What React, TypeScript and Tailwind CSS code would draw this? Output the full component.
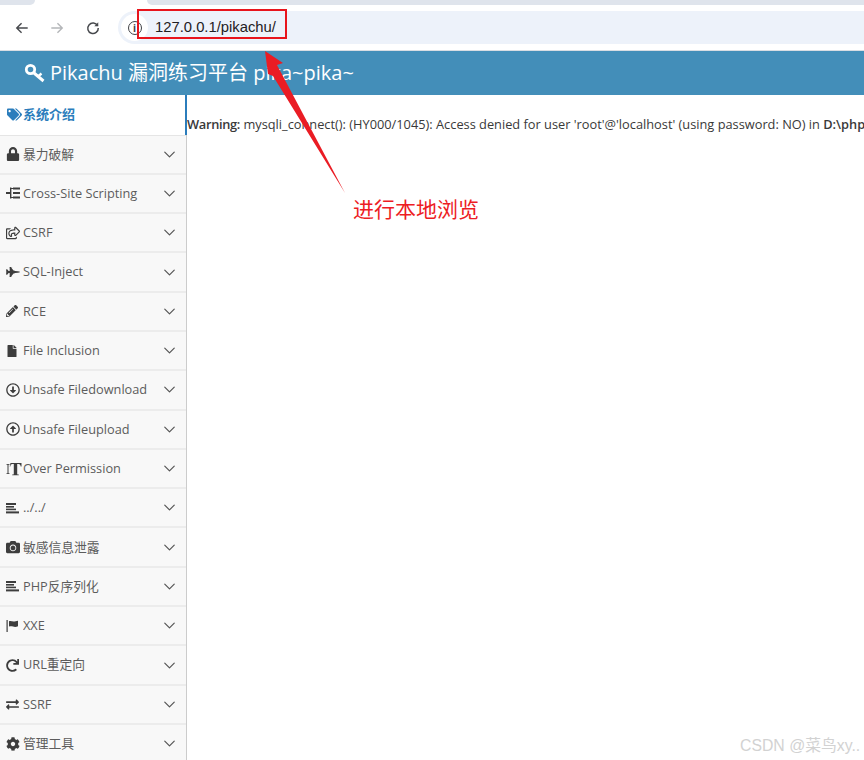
import { ChevronDown } from "lucide-react";
import {
  FaCamera,
  FaCog,
  FaExchangeAlt,
  FaFighterJet,
  FaFile,
  FaLock,
  FaPencilAlt,
  FaRedo,
  FaRegArrowAltCircleDown,
  FaRegArrowAltCircleUp,
  FaRegShareSquare,
  FaTags,
} from "react-icons/fa";
import type { ReactNode } from "react";

const fontStack = "font-['Open_Sans','Noto_Sans_CJK_SC',sans-serif]";

function AlignIcon() {
  return (
    <svg viewBox="0 0 13 12" className="h-3 w-[13px]" fill="currentColor">
      <rect x="0" y="1" width="10" height="2" />
      <rect x="0" y="4" width="8" height="1.6" />
      <rect x="0" y="6.600" width="10" height="1.6" />
      <rect x="0" y="9.400" width="13" height="2" />
    </svg>
  );
}

function TreeIcon() {
  return (
    <svg viewBox="0 0 14 12" className="h-3 w-3.5" fill="currentColor">
      <rect x="0" y="5" width="5" height="2" />
      <rect x="4" y="0.500" width="1.4" height="11" />
      <rect x="7" y="0.500" width="7" height="2" />
      <rect x="7" y="5" width="7" height="2" />
      <rect x="7" y="9.500" width="7" height="2" />
      <rect x="5" y="1" width="2" height="1" />
      <rect x="5" y="10" width="2" height="1" />
    </svg>
  );
}

function FlagIcon() {
  return (
    <svg viewBox="0 0 13 12" className="h-3 w-[13px]" fill="currentColor">
      <rect x="0.500" y="0" width="1.2" height="12" />
      <path d="M3 1.200c2-.9 3.500.7 5.500.2L12 .7v5.600c-2 .9-3.600.8-5 .2-1.400-.5-2.800-.5-4 .1z" />
    </svg>
  );
}

// the "I T" glyph, thin small stem next to a big serif T
function TextHeightIcon() {
  return (
    <svg viewBox="0 0 16 14" className="h-3.5 w-4" fill="currentColor">
      <path d="M.5 2h3v.8h-1v8.400h1v.8h-3v-.8h1V2.800h-1z" />
      <path d="M4.500 1h11v3.500h-.8c-.2-1.500-.6-2.500-2.200-2.500h-1.300v9.800c0 .6.400.8 1.600.8v.6H6.200v-.6c1.200 0 1.600-.2 1.600-.8V2H6.500C4.900 2 4.500 3 4.300 4.500h-.6z" />
    </svg>
  );
}

function KeyIcon() {
  return (
    <svg viewBox="0 0 21 20" className="h-5 w-[21px]" fill="none" stroke="currentColor">
      <circle cx="6.500" cy="6.500" r="4.200" strokeWidth="2.800" />
      <path d="M10 10l9.500 8" strokeWidth="3" />
      <path d="M14 13.500l3.500-3" strokeWidth="2.400" />
    </svg>
  );
}

const menu: { label: string; icon: ReactNode }[] = [
  { label: "暴力破解", icon: <FaLock size={14} /> },
  { label: "Cross-Site Scripting", icon: <TreeIcon /> },
  { label: "CSRF", icon: <FaRegShareSquare size={14} /> },
  { label: "SQL-Inject", icon: <FaFighterJet size={14} /> },
  { label: "RCE", icon: <FaPencilAlt size={12} /> },
  { label: "File Inclusion", icon: <FaFile size={12} /> },
  { label: "Unsafe Filedownload", icon: <FaRegArrowAltCircleDown size={14} /> },
  { label: "Unsafe Fileupload", icon: <FaRegArrowAltCircleUp size={14} /> },
  { label: "Over Permission", icon: <TextHeightIcon /> },
  { label: "../../", icon: <AlignIcon /> },
  { label: "敏感信息泄露", icon: <FaCamera size={14} /> },
  { label: "PHP反序列化", icon: <AlignIcon /> },
  { label: "XXE", icon: <FlagIcon /> },
  { label: "URL重定向", icon: <FaRedo size={13} /> },
  { label: "SSRF", icon: <FaExchangeAlt size={13} /> },
  { label: "管理工具", icon: <FaCog size={14} /> },
];

function ReloadIcon() {
  return (
    <svg viewBox="0 0 16 16" className="ml-[22px] size-[14px]" fill="none" stroke="currentColor" strokeWidth="1.7">
      <path d="M13.300 5.500A6 6 0 1 0 14 8" />
      <path d="M14 1.500v4.500H9.500" fill="currentColor" stroke="none" />
    </svg>
  );
}

function BrowserBar() {
  return (
    <div className="h-[51px] shrink-0 border-b border-[#d9dde3] bg-white">
      <div className="flex h-[5px] bg-white">
        <div className="h-full w-[35px] rounded-br-md bg-[#dfe4ec]" />
        <div className="h-full w-[112px]" />
        <div className="h-full flex-1 rounded-bl-md bg-[#dfe4ec]" />
      </div>
      <div className="flex h-[45px] items-center">
        <div className="flex w-[118px] items-center text-[#47494d]">
          <svg viewBox="0 0 16 16" className="ml-[15px] size-[14px]" fill="none" stroke="currentColor" strokeWidth="1.6">
            <path d="M14.500 8H2M7.500 2.500 2 8l5.500 5.500" />
          </svg>
          <svg viewBox="0 0 16 16" className="ml-[21px] size-[14px] text-[#b4b6b9]" fill="none" stroke="currentColor" strokeWidth="1.6">
            <path d="M1.500 8H14M8.500 2.500 14 8l-5.500 5.500" />
          </svg>
          <ReloadIcon />
        </div>
        <div className="flex h-[33px] flex-1 items-center rounded-l-full bg-[#edf2fa]">
          <div className="ml-[3px] flex size-[27px] items-center justify-center rounded-full bg-white">
            <div className="flex size-[14px] items-center justify-center rounded-full border-[1.5px] border-[#3f4145] text-[10px] leading-none font-bold text-[#3f4145]">
              i
            </div>
          </div>
          <span className="ml-[7px] font-['Liberation_Sans',sans-serif] text-[14.800px] text-[#1f2023]">127.0.0.1/pikachu/</span>
        </div>
      </div>
    </div>
  );
}

function Sidebar() {
  return (
    <aside className="w-[187px] shrink-0 border-r border-[#cccccc] bg-[#f8f8f8]">
      <div className="relative flex h-[40.500px] items-center gap-px border-b border-[#e5e5e5] bg-white pb-px pl-[7px] text-[13px] font-semibold text-[#2b7dbc]">
        <FaTags size={15} />
        <span>系统介绍</span>
        <div className="absolute top-0 right-[-1px] h-full w-0.5 bg-[#2b7dbc]" />
      </div>
      {menu.map((item) => (
        <div
          key={item.label}
          className="flex h-[39.300px] items-center border-b-2 border-[#ececec] pr-[7px] pl-[6px] text-[12.750px] text-[#5c5c5c]"
        >
          <span className="flex w-[17px] shrink-0 items-center justify-start text-[#3d3d3d]">{item.icon}</span>
          <span className="flex-1 truncate">{item.label}</span>
          <ChevronDown size={19} strokeWidth={1.5} className="text-[#555]" />
        </div>
      ))}
    </aside>
  );
}

export default function App() {
  return (
    <div className={`relative flex h-[760px] w-[864px] flex-col overflow-hidden bg-white ${fontStack}`}>
      <BrowserBar />
      <header className="flex h-11 shrink-0 items-center gap-[5px] bg-[#438eb9] pl-6 text-[20px] text-white">
        <KeyIcon />
        <span>Pikachu 漏洞练习平台 pika~pika~</span>
      </header>
      <div className="flex min-h-0 flex-1">
        <Sidebar />
        <main className="min-w-0 flex-1 overflow-hidden pt-5 text-[12.800px] whitespace-nowrap text-[#393939]">
          <b className="font-semibold tracking-[-0.3px]">Warning:</b> mysqli_connect(): (HY000/1045): Access denied for user 'root'@'localhost' (using password: NO) in{" "}
          <b className="font-semibold">D:\php</b>
        </main>
      </div>

      {/* annotation added on top of the screenshot */}
      <div className="absolute top-[9px] left-[137px] h-[30px] w-[150px] border-2 border-[#e8141c]" />
      <svg className="absolute top-0 left-0 h-[760px] w-[864px]" viewBox="0 0 864 760">
        <polygon points="265,51 283,63 277,65 345,193 273,76 268,74" fill="#ea1c24" />
      </svg>
      <div className="absolute top-[194px] left-[353px] font-['Noto_Sans_CJK_SC',sans-serif] text-[21px] leading-7 text-[#ed1c24]">
        进行本地浏览
      </div>
      <div className="absolute top-[736px] left-[740px] font-['Liberation_Sans','Noto_Sans_CJK_SC',sans-serif] text-[15.800px] leading-5 text-[#d2d2d2]">
        CSDN @菜鸟xy..
      </div>
    </div>
  );
}
